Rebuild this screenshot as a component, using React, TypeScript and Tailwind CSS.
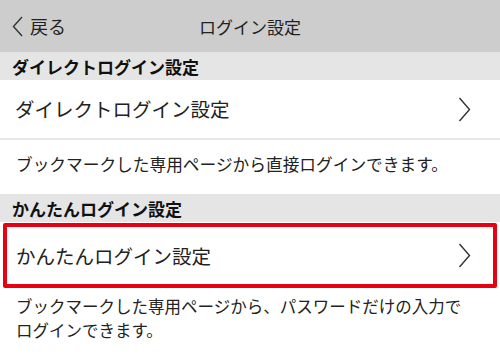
const FONT = { fontFamily: '"Noto Sans CJK JP", "Noto Sans", sans-serif' };

function Chevron() {
  return (
    <svg width="13" height="25" viewBox="0 0 13 25" className="shrink-0">
      <polyline points="1.5,1 11.5,12.5 1.5,24" fill="none" stroke="#333" strokeWidth="1.4" />
    </svg>
  );
}

function SectionHeader({ title }: { title: string }) {
  return (
    <div className="h-[28px] bg-[#e5e5e5] flex items-center px-3">
      <span className="text-[17px] font-bold text-[#111] leading-none">{title}</span>
    </div>
  );
}

export default function App() {
  return (
    <div className="w-[500px] h-[355px] bg-white overflow-hidden" style={FONT}>
      {/* Nav bar */}
      <div className="relative h-[52px] bg-[#cdcdcd] flex items-center justify-center">
        <div className="absolute left-[12px] top-0 h-full flex items-center gap-[7px]">
          <svg width="11" height="21" viewBox="0 0 11 21">
            <polyline points="10,1 1.5,10.5 10,20" fill="none" stroke="#333" strokeWidth="1.4" />
          </svg>
          <span className="text-[18px] text-[#222] leading-none">戻る</span>
        </div>
        <span className="text-[17px] text-[#222] leading-none">ログイン設定</span>
      </div>

      <SectionHeader title="ダイレクトログイン設定" />
      <div className="h-[58px] flex items-center justify-between pl-[15px] pr-[29px]">
        <span className="text-[19.5px] text-[#222] leading-none">ダイレクトログイン設定</span>
        <Chevron />
      </div>
      <div className="h-[2px] bg-[#e8e8e8]" />
      <div className="h-[54px] flex items-center px-4 pb-[6px]">
        <span className="text-[16.7px] text-[#222] leading-none whitespace-nowrap">
          ブックマークした専用ページから直接ログインできます。
        </span>
      </div>

      <SectionHeader title="かんたんログイン設定" />
      <div className="mx-[3px] mt-px h-[65px] border-4 border-[#e60012] rounded-[2px] flex items-center justify-between pl-[9px] pr-[22px]">
        <span className="text-[19.5px] text-[#222] leading-none">かんたんログイン設定</span>
        <Chevron />
      </div>
      <div className="px-4 pt-[6px] text-[16.5px] leading-[24px] text-[#222] whitespace-nowrap">
        ブックマークした専用ページから、パスワードだけの入力で
        <br />
        ログインできます。
      </div>
    </div>
  );
}
